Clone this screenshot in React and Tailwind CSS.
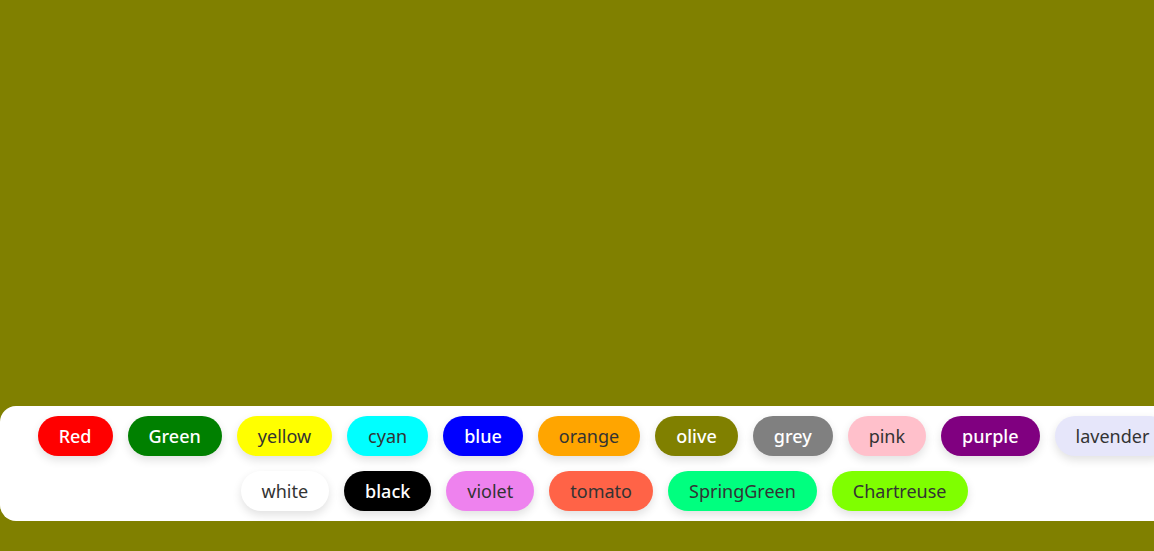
const chips = [
  { label: 'Red', bg: 'bg-[#ff0000]', dark: true },
  { label: 'Green', bg: 'bg-[#008000]', dark: true },
  { label: 'yellow', bg: 'bg-[#ffff00]' },
  { label: 'cyan', bg: 'bg-[#00ffff]' },
  { label: 'blue', bg: 'bg-[#0000ff]', dark: true },
  { label: 'orange', bg: 'bg-[#ffa500]' },
  { label: 'olive', bg: 'bg-[#808000]', dark: true },
  { label: 'grey', bg: 'bg-[#808080]', dark: true },
  { label: 'pink', bg: 'bg-[#ffc0cb]' },
  { label: 'purple', bg: 'bg-[#800080]', dark: true },
  { label: 'lavender', bg: 'bg-[#e6e6fa]' },
  { label: 'white', bg: 'bg-white' },
  { label: 'black', bg: 'bg-black', dark: true },
  { label: 'violet', bg: 'bg-[#ee82ee]' },
  { label: 'tomato', bg: 'bg-[#ff6347]' },
  { label: 'SpringGreen', bg: 'bg-[#00ff7f]' },
  { label: 'Chartreuse', bg: 'bg-[#7fff00]' },
];

export default function App() {
  return (
    <div className="h-[551px] w-full overflow-hidden bg-[#808000] pt-[406px] font-['Noto_Sans',sans-serif]">
      <div className="w-[1208px] rounded-2xl bg-white pt-[10px] pb-[10px]">
        <div className="flex flex-wrap justify-center gap-x-[15px] gap-y-[15px]">
          {chips.map((c) => (
            <button
              key={c.label}
              className={`${c.bg} h-10 rounded-full px-[21px] text-[18px] shadow-[0_4px_10px_rgba(0,0,0,0.12)] ${
                c.dark ? 'text-white font-medium' : 'text-[#333]'
              }`}
            >
              {c.label}
            </button>
          ))}
        </div>
      </div>
    </div>
  );
}
